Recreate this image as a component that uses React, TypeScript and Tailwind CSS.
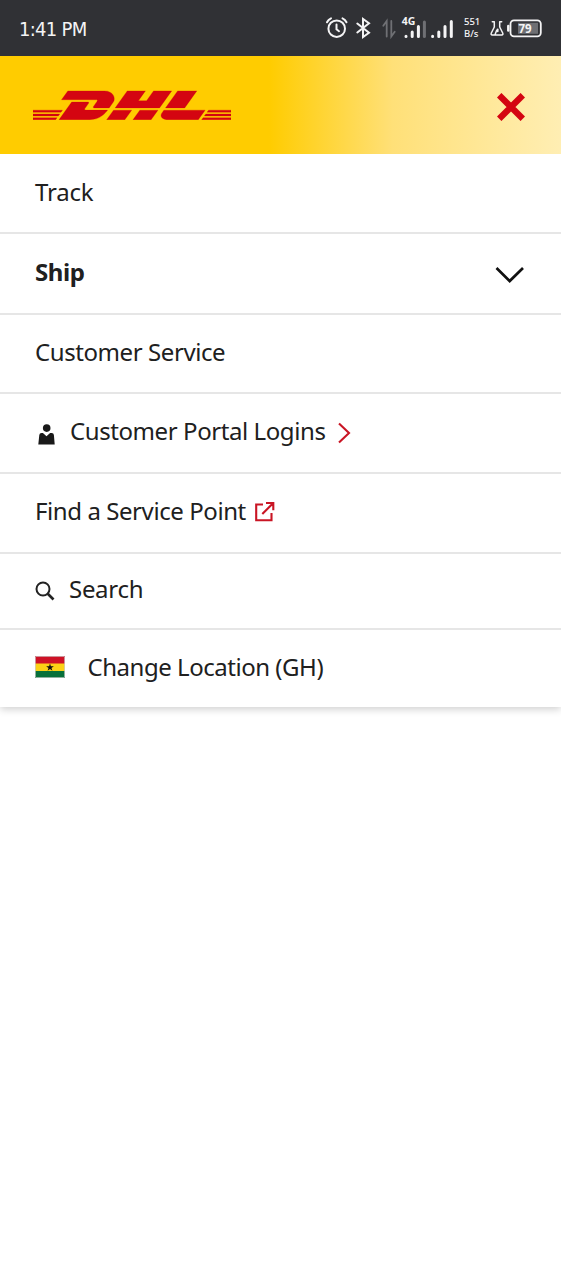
import type { ReactNode } from "react";
import { SiDhl } from "react-icons/si";

function Status() {
  return (
    <div className="flex h-14 shrink-0 items-center justify-between bg-[#303135] pl-[19px] pr-[18px] text-[#f4f4f5]">
      <span className="mt-[1px] whitespace-nowrap font-['DejaVu_Sans_Condensed','DejaVu_Sans',sans-serif] text-[20px] font-stretch-condensed leading-6 tracking-[-0.7px]">
        1:41 PM
      </span>
      <div className="flex h-full items-center">
        <svg width="136" height="56" viewBox="324 0 136 56" fill="none" stroke="currentColor" strokeWidth="2" strokeLinecap="round">
          <circle cx="336.7" cy="28.7" r="8.3" />
          <path d="M336.5 24.5v4.7l2.5 2M327 22.3q1.3-2.7 4-3.9M342.5 18.4q2.7 1.2 4 3.9" />
          <path d="M357.3 23.5l11.7 9.3-6 4.2v-18l6 4.2-11.7 9.3" strokeLinejoin="miter" />
          <path d="M386.7 36.5V21l-3.4 4.8M391.3 21v15.5l3.4-4.8" stroke="#6f7074" strokeWidth="1.8" />
          <g strokeWidth="3">
            <path d="M406 36.3v.1M412.2 32v4.4M418.4 26.5v9.9" />
            <path d="M424.4 22v14.4" stroke="#6f7074" />
            <path d="M432.6 36.3v.1M438.8 32v4.4M445 26.5v9.9M451.3 21.5v14.9" />
          </g>
          <text x="401.8" y="24.5" fill="currentColor" stroke="none" className="font-['Noto_Sans',sans-serif] text-[10.5px] font-bold">4G</text>
        </svg>
        <div className="ml-1 flex w-[20px] flex-col font-['Noto_Sans',sans-serif] text-[9.5px] font-medium leading-[12px]">
          <span>551</span>
          <span>B/s</span>
        </div>
        <svg className="ml-[5px]" width="54" height="56" viewBox="489 0 54 56" fill="none" stroke="currentColor" strokeWidth="1.5" strokeLinecap="round" strokeLinejoin="round">
          <path d="M492.3 21.8h2v5.2l-3 6q-.8 1.9 1 1.9h2.6l1.7-4.5M501.7 21.8h-2v5.2l3 6q.8 1.9-1 1.9h-6.5" />
          <path d="M497.6 29.5v1.8" strokeWidth="2" />
          <path d="M508.3 26v4.5" strokeWidth="2.5" />
          <rect x="510.5" y="20.3" width="30.3" height="16" rx="3.5" strokeWidth="1.8" />
          <rect x="518" y="22.8" width="20" height="11" fill="#6e6f73" stroke="none" />
          <text x="518.5" y="32.6" fill="currentColor" stroke="none" className="font-['Noto_Sans',sans-serif] text-[11.5px] font-bold">79</text>
        </svg>
      </div>
    </div>
  );
}

function Row({ className, children }: { className: string; children: ReactNode }) {
  return <li className={`flex items-center pl-[35px] ${className}`}>{children}</li>;
}

export default function App() {
  return (
    <div className="flex min-h-[1280px] w-[561px] flex-col bg-white font-['Noto_Sans',sans-serif] text-[#202020]">
      <Status />
      <header className="relative z-10 flex h-[98px] items-center justify-between bg-[linear-gradient(90deg,#ffcc00_0%,#ffcc00_48%,#ffe078_70%,#ffeeb3_100%)] pl-[33px] pr-[36px]">
        <SiDhl className="block h-[30px] w-[198px] text-[#d40511]" viewBox="0 10.2 24 3.52" preserveAspectRatio="none" stroke="currentColor" strokeWidth="0.03" />
        <svg className="mt-1" width="28" height="28" viewBox="0 0 28 28" fill="none" stroke="#d40511" strokeWidth="6.3">
          <path d="M2.2 2.2l23.6 23.6M25.8 2.2l-23.6 23.6" />
        </svg>
      </header>
      <nav className="shadow-[0_2px_8px_rgba(0,0,0,0.2)]">
        <ul className="whitespace-nowrap text-[24px] leading-8 tracking-[-0.42px]">
          <Row className="h-[80px] border-b-2 border-[#e6e6e6] pb-[3px]"><span className="tracking-[-0.2px]">Track</span></Row>
          <Row className="h-[81px] justify-between border-b-2 border-[#e6e6e6] pb-[3px] pr-[36px]">
            <span className="font-bold">Ship</span>
            <svg className="mt-[5px]" width="30" height="18" viewBox="0 0 30 18" fill="none" stroke="#111" strokeWidth="2.7"><path d="M1.5 2l13.2 13L28 2" /></svg>
          </Row>
          <Row className="h-[79px] border-b-2 border-[#e6e6e6] pb-[3px]"><span>Customer Service</span></Row>
          <Row className="h-[80px] border-b-2 border-[#e6e6e6] pb-[4px]">
            <svg className="ml-[3px] mt-[6px]" width="17" height="21" viewBox="0 0 17 21" fill="#191919">
              <circle cx="8.7" cy="4.1" r="3.8" />
              <path d="M.3 20.5l1-9.5q.2-2 2.2-2h1.4l3.6 3.2 3.6-3.2h1.6q2 0 2.2 2l.8 9.5z" />
            </svg>
            <span className="ml-[15px]">Customer Portal Logins</span>
            <svg className="ml-3 mt-[4px]" width="15" height="22" viewBox="0 0 15 22" fill="none" stroke="#c91524" strokeWidth="2.1"><path d="M2 1.5l10 9.5-10 9.5" /></svg>
          </Row>
          <Row className="h-[80px] border-b-2 border-[#e6e6e6] pb-[5px]">
            <span>Find a Service Point</span>
            <svg className="ml-2 mt-[1px]" width="21" height="21" viewBox="0 0 21 21" fill="none" stroke="#c91524" strokeWidth="2.1"><path d="M9 3.5H2.2v15.8h15.3V12M12 2h7.3v7.3M19 2.3L8.3 13" /></svg>
          </Row>
          <Row className="h-[76px] border-b-2 border-[#e6e6e6] pb-[5px]">
            <svg className="mt-[5px]" width="20" height="20" viewBox="0 0 20 20" fill="none" stroke="#222" strokeWidth="2"><circle cx="8" cy="8" r="6.5" /><path d="M12.5 12.5l6 6" strokeWidth="2.6" /></svg>
            <span className="ml-[14px] tracking-[-0.3px]">Search</span>
          </Row>
          <Row className="h-[77px] pb-[4px]">
            <svg className="mt-[1px]" width="30" height="22" viewBox="0 0 30 22">
              <path fill="#ce1126" d="M0 0h30v8H0z" /><path fill="#fcd116" d="M0 7.5h30v8H0z" /><path fill="#08703a" d="M0 15h30v7H0z" />
              <path fill="#111" d="M15 7.4l.9 2.8h3l-2.4 1.7.9 2.8-2.4-1.7-2.4 1.7.9-2.8-2.4-1.7h3z" />
              <path d="M.5.5h29v21H.5z" fill="none" stroke="#ccc" strokeOpacity=".7" />
            </svg>
            <span className="ml-[22.5px] tracking-[-0.47px]">Change Location (GH)</span>
          </Row>
        </ul>
      </nav>
    </div>
  );
}
